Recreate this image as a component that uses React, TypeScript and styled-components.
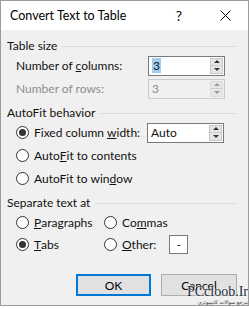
import React from 'react';
import styled, { createGlobalStyle } from 'styled-components';

const GlobalStyle = createGlobalStyle`
  html, body {
    margin: 0;
    padding: 0;
    background: #ffffff;
  }
  * {
    box-sizing: border-box;
  }
`;

const Window = styled.div`
  width: 249px;
  height: 306px;
  border: 1px solid #9b9b9b;
  background: #f0f0f0;
  font-family: Lato, 'Noto Sans', sans-serif;
  font-size: 12px;
  color: #111;
  display: flex;
  flex-direction: column;
  position: relative;
`;

const TitleBar = styled.div`
  height: 29px;
  background: #ffffff;
  display: flex;
  align-items: center;
  padding-left: 9px;
  flex-shrink: 0;
`;

const Title = styled.div`
  flex: 1;
  font-size: 12.5px;
  color: #000;
`;

const TitleButton = styled.div`
  width: 46px;
  height: 29px;
  display: flex;
  align-items: center;
  justify-content: center;
  color: #000;
  font-size: 14px;
`;

const Body = styled.div`
  padding: 6px 6px 0 6px;
  display: flex;
  flex-direction: column;
`;

const GroupHeader = styled.div`
  display: flex;
  align-items: center;
  height: 18px;
  padding-right: 6px;
`;

const GroupLine = styled.div`
  flex: 1;
  height: 1px;
  background: #dcdcdc;
  margin-left: 5px;
  margin-top: 2px;
`;

const Group = styled.div`
  display: flex;
  flex-direction: column;
  padding-left: 9px;
  margin-bottom: 3px;
`;

const Row = styled.div<{ $h?: number }>`
  display: flex;
  align-items: center;
  height: ${(p) => p.$h ?? 23}px;
`;

const Label = styled.span<{ $disabled?: boolean; $w?: number }>`
  color: ${(p) => (p.$disabled ? '#8d8d8d' : '#111')};
  width: ${(p) => (p.$w ? `${p.$w}px` : 'auto')};
  white-space: nowrap;
`;

const SpinBox = styled.div<{ $disabled?: boolean }>`
  width: 77px;
  height: 20px;
  border: 1px solid ${(p) => (p.$disabled ? '#cccccc' : '#7a7a7a')};
  background: ${(p) => (p.$disabled ? '#f0f0f0' : '#ffffff')};
  display: flex;
  align-items: center;
  padding-left: 3px;
  color: ${(p) => (p.$disabled ? '#8d8d8d' : '#111')};
`;

const SpinValue = styled.div`
  flex: 1;
`;

const Selected = styled.span`
  background: #a3cdf0;
  padding: 0 1px;
`;

const SpinButtons = styled.div<{ $disabled?: boolean }>`
  width: 13px;
  height: 16px;
  margin-right: 1px;
  display: flex;
  flex-direction: column;
  border: 1px solid ${(p) => (p.$disabled ? '#dcdcdc' : '#c6c6c6')};
  background: #e6e6e6;
`;

const SpinHalf = styled.div<{ $up?: boolean; $disabled?: boolean }>`
  flex: 1;
  display: flex;
  align-items: center;
  justify-content: center;
  border-top: ${(p) => (p.$up ? 'none' : '1px solid #cfcfcf')};
  &::before {
    content: '';
    width: 0;
    height: 0;
    border-left: 3px solid transparent;
    border-right: 3px solid transparent;
    ${(p) =>
      p.$up
        ? `border-bottom: 3px solid ${p.$disabled ? '#9a9a9a' : '#333'};`
        : `border-top: 3px solid ${p.$disabled ? '#9a9a9a' : '#333'};`}
  }
`;

const Radio = styled.span<{ $checked?: boolean }>`
  width: 13px;
  height: 13px;
  border-radius: 50%;
  border: 1px solid #333;
  background: #fff;
  display: inline-flex;
  align-items: center;
  justify-content: center;
  margin-right: 5px;
  flex-shrink: 0;
  &::after {
    content: '';
    width: 7px;
    height: 7px;
    border-radius: 50%;
    background: ${(p) => (p.$checked ? '#333' : 'transparent')};
  }
`;

const Option = styled.label<{ $w?: number }>`
  display: flex;
  align-items: center;
  white-space: nowrap;
  width: ${(p) => (p.$w ? `${p.$w}px` : 'auto')};
`;

const SmallBox = styled.div`
  width: 19px;
  height: 19px;
  border: 1px solid #7a7a7a;
  background: #fff;
  display: flex;
  align-items: center;
  justify-content: center;
  margin-left: 13px;
`;

const Buttons = styled.div`
  display: flex;
  justify-content: flex-end;
  gap: 10px;
  padding-right: 5px;
  margin-top: 16px;
`;

const Button = styled.div<{ $primary?: boolean }>`
  width: ${(p) => (p.$primary ? 75 : 76)}px;
  height: 22px;
  background: #e1e1e1;
  border: ${(p) => (p.$primary ? '2px solid #0078d7' : '1px solid #adadad')};
  display: flex;
  align-items: center;
  justify-content: center;
  color: #000;
`;

const Watermark = styled.div`
  position: absolute;
  right: 0;
  bottom: 0;
  display: flex;
  flex-direction: column;
  align-items: flex-end;
  line-height: 1;
  pointer-events: none;
`;

const WatermarkTitle = styled.span`
  font-family: 'Liberation Serif', serif;
  font-size: 14px;
  color: #1e2a3a;
  text-shadow: 0 0 2px #fff, 0 0 2px #fff;
`;

const WatermarkSub = styled.span`
  font-family: 'DejaVu Sans', sans-serif;
  font-size: 5px;
  color: #333;
  margin-top: 1px;
`;

const Spinner: React.FC<{ children: React.ReactNode; disabled?: boolean }> = ({
  children,
  disabled,
}) => (
  <SpinBox $disabled={disabled}>
    <SpinValue>{children}</SpinValue>
    <SpinButtons $disabled={disabled}>
      <SpinHalf $up $disabled={disabled} />
      <SpinHalf $disabled={disabled} />
    </SpinButtons>
  </SpinBox>
);

const App: React.FC = () => {
  return (
    <>
      <GlobalStyle />
      <Window>
        <TitleBar>
          <Title>Convert Text to Table</Title>
          <TitleButton>?</TitleButton>
          <TitleButton>
            <svg width="11" height="11" viewBox="0 0 11 11">
              <path d="M0.5 0.5 L10.5 10.5 M10.5 0.5 L0.5 10.5" stroke="#000" strokeWidth="1" />
            </svg>
          </TitleButton>
        </TitleBar>
        <Body>
          <GroupHeader>
            Table size
            <GroupLine />
          </GroupHeader>
          <Group>
            <Row>
              <Label $w={132}>
                Number of <u>c</u>olumns:
              </Label>
              <Spinner>
                <Selected>3</Selected>
              </Spinner>
            </Row>
            <Row>
              <Label $w={132} $disabled>
                Number of rows:
              </Label>
              <Spinner disabled>3</Spinner>
            </Row>
          </Group>

          <GroupHeader>
            AutoFit behavior
            <GroupLine />
          </GroupHeader>
          <Group>
            <Row>
              <Option $w={131}>
                <Radio $checked />
                Fixed column&nbsp;<u>w</u>idth:
              </Option>
              <Spinner>Auto</Spinner>
            </Row>
            <Row>
              <Option>
                <Radio />
                Auto<u>F</u>it to contents
              </Option>
            </Row>
            <Row>
              <Option>
                <Radio />
                AutoFit to win<u>d</u>ow
              </Option>
            </Row>
          </Group>

          <GroupHeader>
            Separate text at
            <GroupLine />
          </GroupHeader>
          <Group>
            <Row $h={22}>
              <Option $w={88}>
                <Radio />
                <u>P</u>aragraphs
              </Option>
              <Option>
                <Radio />
                Co<u>m</u>mas
              </Option>
            </Row>
            <Row $h={22}>
              <Option $w={88}>
                <Radio $checked />
                <u>T</u>abs
              </Option>
              <Option>
                <Radio />
                <u>O</u>ther:
              </Option>
              <SmallBox>-</SmallBox>
            </Row>
          </Group>

          <Buttons>
            <Button $primary>OK</Button>
            <Button>Cancel</Button>
          </Buttons>
        </Body>
        <Watermark>
          <WatermarkTitle>PCcloob.Ir</WatermarkTitle>
          <WatermarkSub>مرجع سوالات کامپیوتری</WatermarkSub>
        </Watermark>
      </Window>
    </>
  );
};

export default App;
